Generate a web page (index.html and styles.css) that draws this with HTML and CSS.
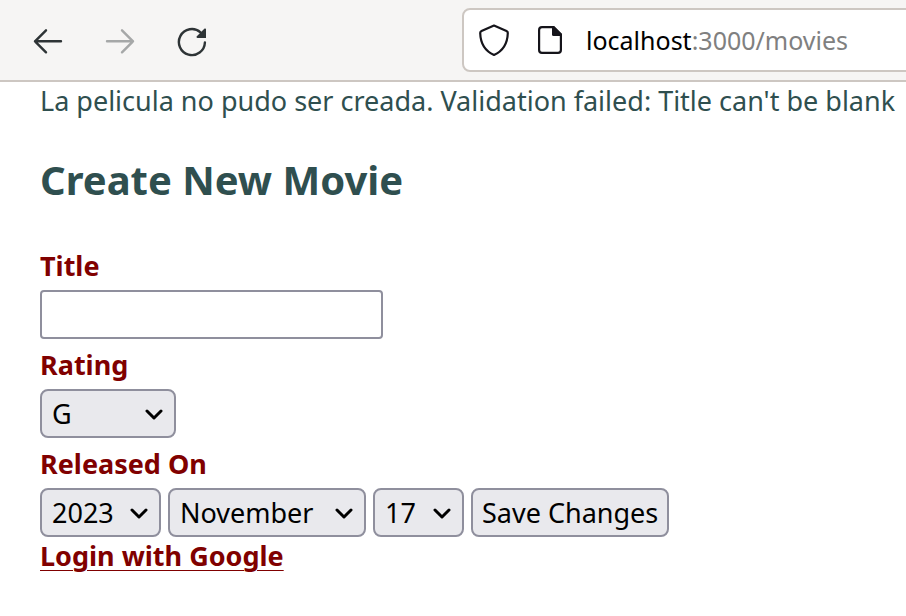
FILE: index.html
```html
<!DOCTYPE html>
<html lang="en">
<head>
<meta charset="utf-8">
<meta name="viewport" content="width=device-width, initial-scale=1">
<title>Create New Movie</title>
<link rel="stylesheet" href="styles.css">
</head>
<body>
<header class="toolbar">
  <nav class="nav-buttons" aria-label="Browser navigation">
    <button class="icon-button" type="button" aria-label="Back">
      <svg width="32" height="32" viewBox="0 0 32 32" fill="none" stroke="currentColor" stroke-width="2.4" stroke-linecap="round" stroke-linejoin="round"><path d="M29 16.300H3M14 5.300 3 16.300l11 11"/></svg>
    </button>
    <button class="icon-button" type="button" aria-label="Forward" disabled>
      <svg width="32" height="32" viewBox="0 0 32 32" fill="none" stroke="currentColor" stroke-width="2.4" stroke-linecap="round" stroke-linejoin="round"><path d="M3 16.300h26M18 5.300l11 11-11 11"/></svg>
    </button>
    <button class="icon-button" type="button" aria-label="Reload">
      <svg width="32" height="32" viewBox="0 0 32 32" fill="none" stroke="currentColor" stroke-width="2.4" stroke-linecap="round"><path d="M28.900 17.500A13 13 0 1 1 24.500 7.300"/><path d="M30 4v9h-8.500c-1 0-1.300-1-.7-1.700l7.500-7.500c.7-.6 1.700-.4 1.700.2Z" fill="currentColor" stroke="none"/></svg>
    </button>
  </nav>
  <div class="address">
    <svg class="address-icon" width="32" height="34" viewBox="0 0 32 34" fill="none" stroke="currentColor" stroke-width="2.200" stroke-linejoin="round"><path d="M16 2.500 28.500 8c.9.400 1.400 1 1.300 2C29.500 20 25 28 16 32 7 28 2.500 20 2.200 10c0-1 .4-1.600 1.300-2Z"/></svg>
    <svg class="address-icon" width="24" height="28" viewBox="0 0 24 28"><path d="M15 1.100H4A2.900 2.900 0 0 0 1.100 4v20A2.900 2.900 0 0 0 4 26.900h16a2.900 2.900 0 0 0 2.900-2.900V8.500L15.500 1.100Z" fill="none" stroke="currentColor" stroke-width="2.200"/><path d="M14 0h2l8 8v2h-8.500a1.500 1.500 0 0 1-1.500-1.500Z" fill="currentColor"/></svg>
    <span class="url">localhost<span class="url-rest">:3000/movies</span></span>
  </div>
</header>
<main class="page">
  <p class="notice">La pelicula no pudo ser creada. Validation failed: Title can't be blank</p>
  <h1 class="heading">Create New Movie</h1>
  <form class="movie-form">
    <label class="label" for="title">Title</label>
    <input class="control text-input" id="title" name="title" type="text">
    <label class="label" for="rating">Rating</label>
    <span class="select rating">
      <select class="control" id="rating" name="rating">
        <option>G</option><option>PG</option><option>PG-13</option><option>R</option><option>NC-17</option>
      </select>
      <svg class="chevron" width="18" height="12" viewBox="0 0 18 12"><path d="M2 2l7 7 7-7"/></svg>
    </span>
    <label class="label" for="year">Released On</label>
    <div class="row">
      <span class="select year">
        <select class="control" id="year" name="year"><option>2023</option></select>
        <svg class="chevron" width="18" height="12" viewBox="0 0 18 12"><path d="M2 2l7 7 7-7"/></svg>
      </span>
      <span class="select month">
        <select class="control" name="month" aria-label="Month"><option>November</option></select>
        <svg class="chevron" width="18" height="12" viewBox="0 0 18 12"><path d="M2 2l7 7 7-7"/></svg>
      </span>
      <span class="select day">
        <select class="control" name="day" aria-label="Day"><option>17</option></select>
        <svg class="chevron" width="18" height="12" viewBox="0 0 18 12"><path d="M2 2l7 7 7-7"/></svg>
      </span>
      <button class="control save" type="submit">Save Changes</button>
    </div>
  </form>
  <a class="login" href="#">Login with Google</a>
</main>
</body>
</html>
```
FILE: styles.css
```css
* { box-sizing: border-box; }

body {
  margin: 0;
  background: #fff;
  color: #2f4f4f;
  font: 27px/38px "Noto Sans", sans-serif;
}

.toolbar {
  display: flex;
  align-items: center;
  height: 82px;
  overflow: hidden;
  background: #f6f5f4;
  border-bottom: 2px solid #cdc7c2;
}

.nav-buttons {
  display: flex;
  flex: none;
  gap: 40px;
  width: 462px;
  padding: 2px 0 0 32px;
}

.icon-button {
  display: flex;
  padding: 0;
  border: 0;
  background: none;
  color: #2e3436;
}

.icon-button:disabled { color: #a6a8a8; }

.address {
  display: flex;
  flex: 1;
  align-items: center;
  gap: 28px;
  height: 64px;
  margin-right: -12px;
  padding-left: 14px;
  background: #fff;
  border: 2px solid #cdc7c2;
  border-radius: 8px;
  color: #15141a;
}

.address-icon { flex: none; }

.url {
  margin-left: -4px;
  color: #000;
  font-size: 25px;
  white-space: nowrap;
}

.url-rest { color: #808080; }

.page { padding: 0 8px 24px 40px; }

.notice { margin: 0; }

.heading {
  margin: 34px 0;
  font-size: 40px;
  line-height: 52px;
}

.movie-form {
  display: flex;
  flex-direction: column;
  align-items: flex-start;
}

.label {
  padding-top: 2px;
  color: #800000;
  font-weight: 700;
  line-height: 48px;
}

.control {
  height: 49px;
  margin: 0;
  border: 2px solid #8f8f9d;
  border-radius: 8px;
  background: #e9e9ed;
  color: #000;
  font: inherit;
}

.text-input {
  width: 343px;
  max-width: 100%;
  padding: 0 8px;
  border-radius: 4px;
  background: #fff;
}

.select {
  display: flex;
  position: relative;
}

.select .control {
  width: 100%;
  padding: 0 10px;
  appearance: none;
}

.chevron {
  position: absolute;
  top: 20px;
  right: 13px;
  fill: none;
  stroke: #000;
  stroke-width: 3;
  stroke-linecap: round;
  stroke-linejoin: round;
  pointer-events: none;
}

.rating { width: 136px; }
.year { width: 121px; }
.month { width: 198px; }
.day { width: 91px; }

.row {
  display: flex;
  flex-wrap: wrap;
  gap: 7px;
}

.save { padding: 0 9px; }

.login {
  color: #800000;
  font-weight: 700;
  text-decoration-thickness: 1px;
  text-underline-offset: 4px;
}
```
